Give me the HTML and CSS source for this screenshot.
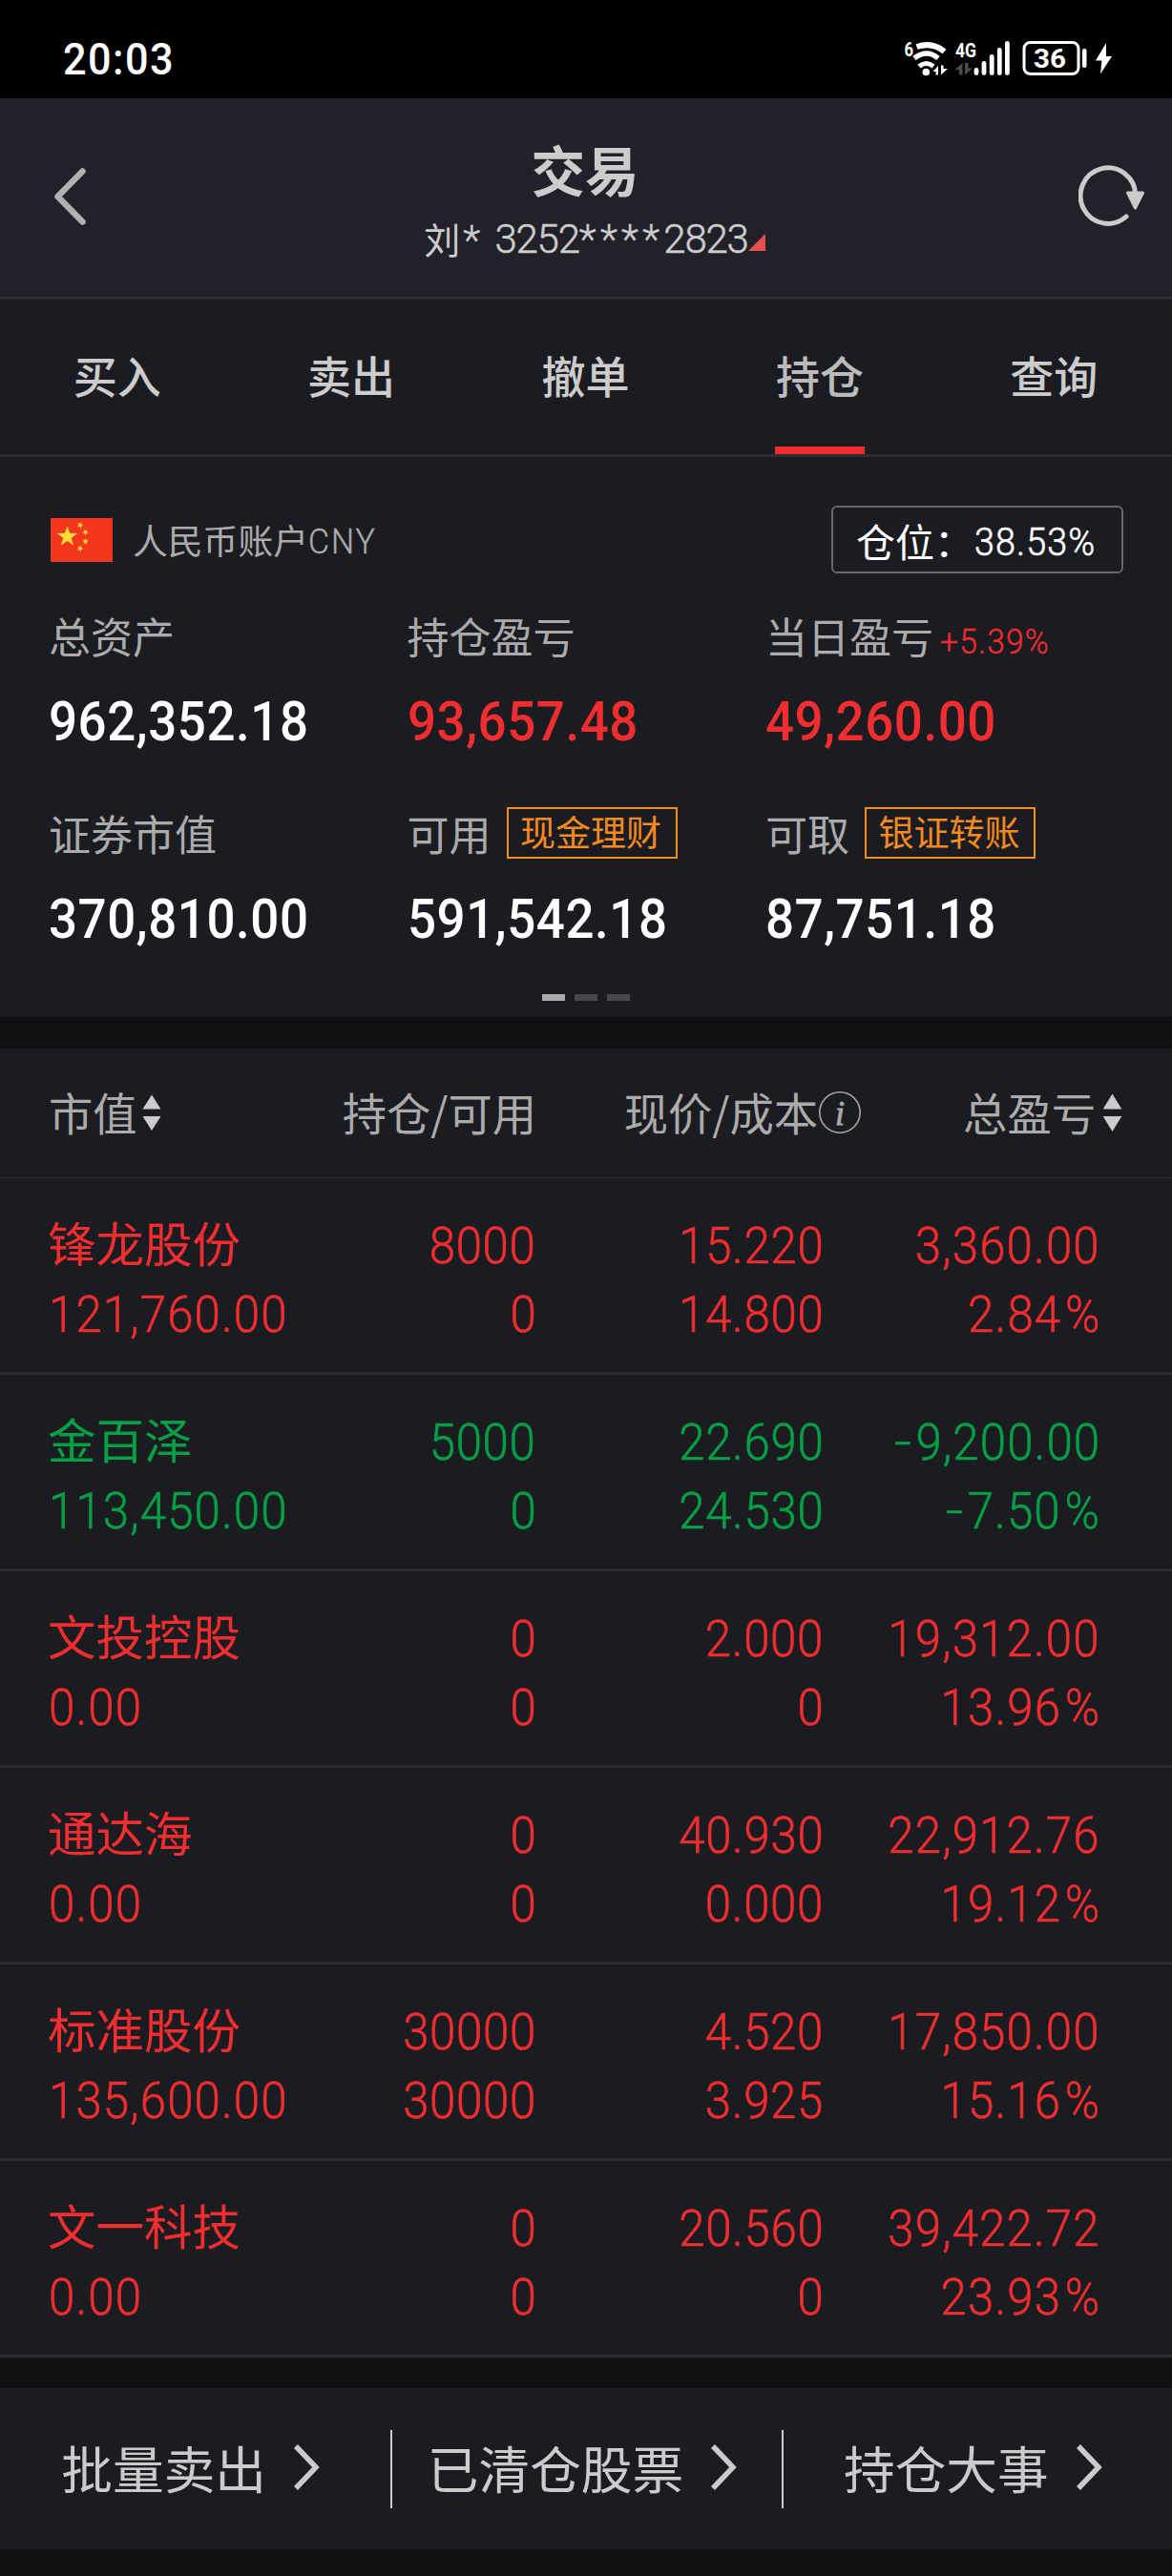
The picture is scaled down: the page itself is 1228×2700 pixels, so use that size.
FILE: index.html
```html
<!DOCTYPE html>
<html lang="zh-CN">
<head>
<meta charset="utf-8">
<title>交易</title>
<link rel="stylesheet" href="styles.css">
</head>
<body>
<header class="status">
  <span class="clock num">20:03</span>
  <svg class="status-icons" width="230" height="103" viewBox="940 0 230 103">
    <g fill="none" stroke="#fff" stroke-linecap="butt">
      <path d="M960.500 49Q977 43.500 989.500 54" stroke-width="6"/>
      <path d="M958 61Q971 51 983 61" stroke-width="5.500"/>
      <path d="M963 69.500Q970.500 63.500 978 69.500" stroke-width="5"/>
    </g>
    <circle cx="970.300" cy="75.500" r="3.800" fill="#fff"/>
    <path d="M983 69v9.500h-2.500v-3.500h-3zM986 78.500v-10h2.500v3.500h4.500z" fill="#fff"/>
    <text class="net" x="947.500" y="58.500" textLength="9.500" lengthAdjust="spacingAndGlyphs">6</text>
    <text class="net" x="1001" y="59.500" textLength="22" lengthAdjust="spacingAndGlyphs">4G</text>
    <path d="M1008.500 66v12.500h-3.500v-5.500h-4.500zM1011 78.500v-12.500h3.500v5.500h4.500z" fill="#4a4a4a"/>
    <path d="M1023 73.500v3M1031 66.500v10M1039.200 59.500v17M1047.300 52.500v24M1055.400 45.500v31" stroke="#fff" stroke-width="4.800" stroke-linecap="round"/>
    <rect x="1073" y="44.500" width="57" height="33" rx="6.500" fill="none" stroke="#fff" stroke-width="3"/>
    <rect x="1134" y="51" width="4.500" height="20" rx="2" fill="#fff"/>
    <text class="level" x="1083" y="71" textLength="34" lengthAdjust="spacingAndGlyphs">36</text>
    <path d="M1159 45l-11 18.500h6.500l-1.500 14 12-18.500h-6z" fill="#fff"/>
  </svg>
</header>

<nav class="titlebar">
  <svg class="back" width="40" height="70" viewBox="0 0 40 70"><path d="M34.500 9.500L8.500 36L34.500 62.500" fill="none" stroke="#b0b0b1" stroke-width="6.500" stroke-linecap="round" stroke-linejoin="round"/></svg>
  <div class="title">
    <h1>交易</h1>
    <div class="account"><span>刘<i class="star first">*</i></span><span class="digits">3252<i class="star">****</i>2823</span><svg width="18" height="18" viewBox="0 0 18 18"><path d="M18 0v18H0z" fill="#e6504c"/></svg></div>
  </div>
  <svg class="refresh" width="80" height="80" viewBox="0 0 80 80"><path d="M60.200 40A28.800 29.200 0 1 0 50.500 62.500" transform="translate(-0.500 -0.500)" fill="none" stroke="#cbcbcb" stroke-width="5" stroke-linecap="round"/><path d="M51.500 37h16l-8 16z" fill="#cbcbcb" stroke="#cbcbcb" stroke-width="3" stroke-linejoin="round"/></svg>
</nav>

<nav class="tabs">
  <a>买入</a><a>卖出</a><a>撤单</a><a class="active">持仓</a><a>查询</a>
</nav>

<section class="summary">
  <div class="currency">
    <svg width="65" height="46" viewBox="0 0 65 46">
      <defs><path id="star" d="M0-10L2.350-3.240 9.510-3.090 3.800 1.240 5.880 8.090 0 4 -5.880 8.090 -3.800 1.240 -9.510-3.090 -2.350-3.240z"/></defs>
      <rect width="65" height="46" fill="#f3361d"/>
      <g fill="#fddb3a"><use href="#star" transform="translate(17.500 19.500) scale(1.120)"/><use href="#star" transform="translate(31 7.500) rotate(20) scale(.360)"/><use href="#star" transform="translate(36.500 15) rotate(40) scale(.360)"/><use href="#star" transform="translate(36.500 24.500) scale(.360)"/><use href="#star" transform="translate(31 32) rotate(20) scale(.360)"/></g>
    </svg>
    <span>人民币账户</span><span class="cny num">CNY</span>
    <div class="position"><span>仓位：</span><span class="num">38.53%</span></div>
  </div>
  <div class="stats">
    <div class="stat"><div class="label">总资产</div><div class="value num">962,352.18</div></div>
    <div class="stat"><div class="label">持仓盈亏</div><div class="value num up">93,657.48</div></div>
    <div class="stat"><div class="label">当日盈亏<span class="rate num up">+5.39%</span></div><div class="value num up">49,260.00</div></div>
    <div class="stat"><div class="label">证券市值</div><div class="value num">370,810.00</div></div>
    <div class="stat"><div class="label">可用<span class="tag">现金理财</span></div><div class="value num">591,542.18</div></div>
    <div class="stat"><div class="label">可取<span class="tag">银证转账</span></div><div class="value num">87,751.18</div></div>
  </div>
  <div class="pager"><i class="on"></i><i></i><i></i></div>
</section>

<section class="holdings">
  <div class="row head">
    <div>市值<svg class="sort" width="20" height="40" viewBox="0 0 20 40"><path d="M10 1.500l9.500 15H.5zM10 39L.5 24h19z"/></svg></div>
    <div>持仓/可用</div>
    <div>现价/成本<svg class="info" width="46" height="46" viewBox="0 0 46 46"><circle cx="23" cy="23" r="21.200" fill="none" stroke="#aaa" stroke-width="1.600"/><text x="23" y="35.500" text-anchor="middle">i</text></svg></div>
    <div>总盈亏<svg class="sort" width="21" height="40" viewBox="0 0 20 40"><path d="M10 .5l9.800 16H.2zM10 40L.2 24h19.600z"/></svg></div>
  </div>
  <div class="row up"><div><b>锋龙股份</b><span class="num">121,760.00</span></div><div><span class="num">8000</span><span class="num">0</span></div><div><span class="num">15.220</span><span class="num">14.800</span></div><div><span class="num">3,360.00</span><span class="num">2.84<i class="pct">%</i></span></div></div>
  <div class="row down"><div><b>金百泽</b><span class="num">113,450.00</span></div><div><span class="num">5000</span><span class="num">0</span></div><div><span class="num">22.690</span><span class="num">24.530</span></div><div><span class="num"><i class="minus">-</i>9,200.00</span><span class="num"><i class="minus">-</i>7.50<i class="pct">%</i></span></div></div>
  <div class="row up"><div><b>文投控股</b><span class="num">0.00</span></div><div><span class="num">0</span><span class="num">0</span></div><div><span class="num">2.000</span><span class="num">0</span></div><div><span class="num">19,312.00</span><span class="num">13.96<i class="pct">%</i></span></div></div>
  <div class="row up"><div><b>通达海</b><span class="num">0.00</span></div><div><span class="num">0</span><span class="num">0</span></div><div><span class="num">40.930</span><span class="num">0.000</span></div><div><span class="num">22,912.76</span><span class="num">19.12<i class="pct">%</i></span></div></div>
  <div class="row up"><div><b>标准股份</b><span class="num">135,600.00</span></div><div><span class="num">30000</span><span class="num">30000</span></div><div><span class="num">4.520</span><span class="num">3.925</span></div><div><span class="num">17,850.00</span><span class="num">15.16<i class="pct">%</i></span></div></div>
  <div class="row up"><div><b>文一科技</b><span class="num">0.00</span></div><div><span class="num">0</span><span class="num">0</span></div><div><span class="num">20.560</span><span class="num">0</span></div><div><span class="num">39,422.72</span><span class="num">23.93<i class="pct">%</i></span></div></div>
</section>

<footer class="actions">
  <a>批量卖出<svg width="28" height="48" viewBox="0 0 28 48"><path d="M3 2L24 24L3 46"/></svg></a>
  <a>已清仓股票<svg width="28" height="48" viewBox="0 0 28 48"><path d="M3 2L24 24L3 46"/></svg></a>
  <a>持仓大事<svg width="28" height="48" viewBox="0 0 28 48"><path d="M3 2L24 24L3 46"/></svg></a>
</footer>
</body>
</html>
```

FILE: styles.css
```css
* { box-sizing: border-box; }
body {
  margin: 0;
  width: 1228px;
  height: 2700px;
  overflow: hidden;
  background: #101012;
  color: #ababab;
  font-family: "Noto Sans CJK SC", sans-serif;
}
svg { display: block; flex: none; }
i { font-style: normal; }
b { font-weight: 400; }
.num {
  font-family: Roboto, sans-serif;
  transform: scaleX(.92);
  transform-origin: left;
  white-space: nowrap;
}
.up { color: #f02d2f; }
.down { color: #069f44; }

/* status bar */
.status {
  height: 103px;
  padding: 0 58px 0 66px;
  display: flex;
  justify-content: space-between;
  background: #000;
  color: #fff;
}
.clock { font-size: 47px; font-weight: 500; line-height: 123px; letter-spacing: 1.600px; }
.status-icons text { font-family: Roboto, sans-serif; fill: #fff; font-weight: 700; }
.status-icons .net { font-size: 21px; }
.status-icons .level { font-size: 28px; }

/* title bar */
.titlebar {
  height: 211px;
  padding: 0 18px 4px 52px;
  display: flex;
  justify-content: space-between;
  align-items: center;
  background: #212129;
  border-bottom: 3px solid #2c2d32;
}
.title { flex: 1; text-align: center; color: #ccc; padding: 12px 0 0 4px; }
.title h1 { margin: 0; font-size: 56.500px; font-weight: 700; line-height: 76px; }
.account {
  display: flex;
  justify-content: center;
  align-items: center;
  height: 70px;
  padding-left: 20px;
  font-size: 38px;
}
.account .digits, .star { font-family: Roboto, sans-serif; font-size: 42px; font-weight: 300; letter-spacing: -1.200px; -webkit-text-stroke: .5px; }
.account .star { letter-spacing: 4.300px; }
.star.first { margin-left: 3px; }
.account .digits { margin-left: 11px; padding-top: 2px; }
.account svg { margin-top: 9px; }

/* tabs */
.tabs {
  height: 165px;
  padding-right: 1px;
  display: grid;
  grid-template-columns: repeat(5, 1fr);
  justify-items: center;
  border-bottom: 3px solid #2c2d32;
  background: #1b1c21;
}
.tabs a { width: 94px; text-align: center; font-size: 46px; font-weight: 500; line-height: 156px; height: 162px; color: #ccc; }
.tabs .active { color: #bbb; border-bottom: 8px solid #f02d2f; }

/* account summary */
.summary { height: 587px; padding: 51px 51px 0 52px; background: #1b1c21; }
.currency { display: flex; align-items: center; height: 71px; font-size: 36.800px; }
.currency > svg { margin-left: 1px; }
.currency > span:nth-of-type(1) { margin: -2px 0 0 21px; }
.cny { font-weight: 300; letter-spacing: 2.200px; padding-top: 3px; -webkit-text-stroke: .4px; }
.position {
  margin-left: auto;
  width: 306px;
  height: 71px;
  padding-left: 24px;
  border: 2px solid #68686b;
  border-radius: 6px;
  display: flex;
  align-items: center;
  color: #fff;
  font-size: 41px;
}
.position .num { letter-spacing: 1.200px; margin-left: 1px; padding-top: 4px; font-weight: 300; -webkit-text-stroke: .6px; }
.stats { display: grid; grid-template-columns: 375.500px 375.500px 1fr; grid-template-rows: 207px 207px; margin: 33px 0 0 -1px; }
.label { display: flex; align-items: center; height: 64px; font-size: 44px; white-space: nowrap; }
.rate { font-size: 36.500px; font-weight: 300; margin: 12px 0 0 7px; letter-spacing: 1.300px; -webkit-text-stroke: .4px; }
.value { margin-top: 27px; font-size: 57.500px; font-weight: 500; line-height: 64px; letter-spacing: .600px; }
.value:not(.up) { color: #fff; }
.tag {
  width: 179px;
  height: 54px;
  margin-left: 16px;
  padding-right: 2px;
  border: 2px solid #f58a1f;
  color: #f58a1f;
  font-size: 37px;
  line-height: 46px;
  text-align: center;
}
.pager { display: flex; justify-content: center; gap: 10px; margin: -6px 2px 0 0; }
.pager i { width: 24px; height: 7px; background: #48484c; }
.pager .on { background: #ababab; }

/* holdings table */
.holdings { margin-top: 33px; background: #1b1c21; }
.row {
  display: grid;
  grid-template-columns: 302px 210px 301px 290px;
  height: 206px;
  padding: 35px 0 0 50px;
  border-bottom: 3px solid #2c2d32;
}
.row > div { display: flex; flex-direction: column; align-items: flex-end; }
.row > div:first-child { align-items: flex-start; }
.row b { font-size: 50.500px; line-height: 66px; height: 72px; margin-top: -2px; margin-bottom: 2px; }
.row .num { font-size: 53.500px; font-weight: 300; line-height: 72px; letter-spacing: .700px; transform-origin: right; -webkit-text-stroke: .6px; }
.row > div:first-child .num { transform-origin: left; margin-left: 1px; letter-spacing: 1.200px; }
.row > div:last-child .num { letter-spacing: 1.200px; }
.row .minus { display: inline-block; transform: scaleX(1.300); transform-origin: right; margin: 0 3px 0 5px; }
.row .pct { margin-left: 4px; }
.row.head {
  grid-template-columns: 200px 311px 341px 273px;
  height: 136px;
  padding: 0 0 0 51px;
  border-bottom-width: 1px;
  font-size: 46.300px;
}
.row.head > div { flex-direction: row; align-items: center; justify-content: flex-end; padding-bottom: 4px; white-space: nowrap; }
.row.head > div:first-child { justify-content: flex-start; }
.sort { fill: #ccc; margin-left: 5px; margin-top: 2px; }
.row.head > div:last-child .sort { margin-left: 7px; }
.info { margin-top: 2px; }
.info text { font: italic 36px "Liberation Serif", serif; fill: #aaa; stroke: #aaa; stroke-width: .8px; }

/* bottom actions */
.actions {
  display: grid;
  grid-template-columns: repeat(3, 1fr);
  margin-top: 32px;
  height: 169px;
  align-items: center;
  background: #1b1c21;
  color: #cbcbcb;
  font-size: 53.700px;
}
.actions a { display: flex; justify-content: center; align-items: center; height: 82px; padding: 0 10px 3px 0; line-height: 78px; }
.actions a + a { border-left: 2px solid #cbcbcb; }
.actions svg { margin-left: 28px; fill: none; stroke: #cbcbcb; stroke-width: 5.500; }
```
